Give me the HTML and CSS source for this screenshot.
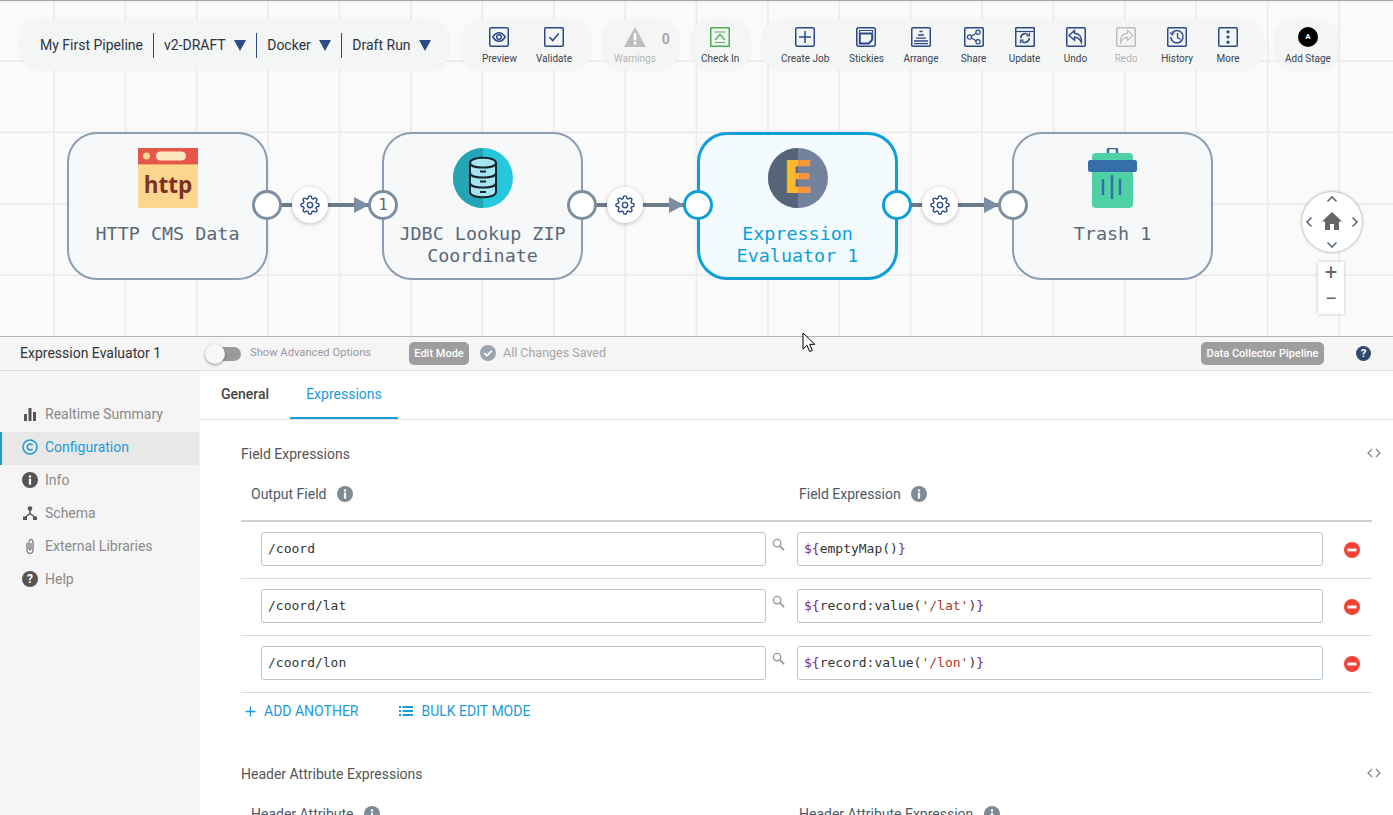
FILE: index.html
```html
<!DOCTYPE html>
<html lang="en">
<head>
    <meta charset="UTF-8">
    <meta name="viewport" content="width=device-width, initial-scale=1.0">
    <title>My First Pipeline</title>
    <link rel="stylesheet" href="styles.css">
</head>
<body>
    <svg class="sprite" aria-hidden="true">
        <symbol id="gear" viewBox="0 0 24 24">
            <circle cx="12" cy="12" r="3.2"/>
            <path d="M19.4 15a1.65 1.65 0 0 0 .33 1.82l.06.06a2 2 0 0 1 0 2.83 2 2 0 0 1-2.83 0l-.06-.06a1.65 1.65 0 0 0-1.82-.33 1.65 1.65 0 0 0-1 1.51V21a2 2 0 0 1-2 2 2 2 0 0 1-2-2v-.09A1.65 1.65 0 0 0 9 19.4a1.65 1.65 0 0 0-1.82.33l-.06.06a2 2 0 0 1-2.83 0 2 2 0 0 1 0-2.83l.06-.06a1.65 1.65 0 0 0 .33-1.82 1.65 1.65 0 0 0-1.51-1H3a2 2 0 0 1-2-2 2 2 0 0 1 2-2h.09A1.65 1.65 0 0 0 4.6 9a1.65 1.65 0 0 0-.33-1.82l-.06-.06a2 2 0 0 1 0-2.83 2 2 0 0 1 2.83 0l.06.06a1.65 1.65 0 0 0 1.82.33H9a1.65 1.65 0 0 0 1-1.51V3a2 2 0 0 1 2-2 2 2 0 0 1 2 2v.09a1.65 1.65 0 0 0 1 1.51 1.65 1.65 0 0 0 1.82-.33l.06-.06a2 2 0 0 1 2.83 0 2 2 0 0 1 0 2.83l-.06.06a1.65 1.65 0 0 0-.33 1.82V9a1.65 1.65 0 0 0 1.51 1H21a2 2 0 0 1 2 2 2 2 0 0 1-2 2h-.09a1.65 1.65 0 0 0-1.51 1z"/>
        </symbol>
        <symbol id="info" viewBox="0 0 16 16">
            <circle cx="8" cy="8" r="8" fill="currentColor"/>
            <circle cx="8" cy="4.4" r="1.2" fill="#fff"/>
            <rect x="6.9" y="6.6" width="2.2" height="6" fill="#fff"/>
        </symbol>
        <symbol id="search" viewBox="0 0 14 14">
            <circle cx="5.5" cy="5.5" r="4" fill="none" stroke="currentColor" stroke-width="1.5"/>
            <path d="M8.5 8.5l4.5 4.5" fill="none" stroke="currentColor" stroke-width="2"/>
        </symbol>
        <symbol id="remove" viewBox="0 0 16 16">
            <circle cx="8" cy="8" r="8" fill="#f44336"/>
            <rect x="3.5" y="6.6" width="9" height="2.8" fill="#fff"/>
        </symbol>
        <symbol id="collapse" viewBox="0 0 14 10">
            <path d="M5 1L1 5l4 4M9 1l4 4-4 4" fill="none" stroke="currentColor" stroke-width="1.3"/>
        </symbol>
    </svg>

    <div class="canvas">
        <div class="toolbar">
            <div class="tool-group pipeline-info">
                <span class="pipeline-name">My First Pipeline</span>
                <span class="divider"></span>
                <span class="selector">v2-DRAFT<i class="caret"></i></span>
                <span class="divider"></span>
                <span class="selector">Docker<i class="caret"></i></span>
                <span class="divider"></span>
                <span class="selector">Draft Run<i class="caret"></i></span>
            </div>

            <div class="tool-group group-preview">
                <div class="tool">
                    <svg class="tool-icon" viewBox="0 0 20 20"><rect x=".75" y=".75" width="18.5" height="18.5" rx="1.5"/><path d="M3.8 10c2-3.1 4-4.3 6.2-4.3s4.200 1.200 6.200 4.300c-2 3.100-4 4.300-6.200 4.300S5.800 13.100 3.800 10z"/><circle cx="10" cy="10" r="2.300"/></svg>
                    <span class="tool-label">Preview</span>
                </div>
                <div class="tool">
                    <svg class="tool-icon" viewBox="0 0 20 20"><rect x=".75" y=".75" width="18.5" height="18.5" rx="1"/><path d="M5.500 10l3.200 3.500 6-7"/></svg>
                    <span class="tool-label">Validate</span>
                </div>
            </div>

            <div class="tool-group group-warnings">
                <div class="tool">
                    <svg class="warning-icon" viewBox="0 0 22 20"><polygon points="11,0 22,20 0,20" fill="#bdbdbd"/><rect x="9.700" y="6" width="2.600" height="7.500" fill="#fff"/><rect x="9.700" y="15" width="2.600" height="2.600" fill="#fff"/></svg>
                    <span class="tool-label is-disabled">Warnings</span>
                </div>
                <span class="warning-count">0</span>
            </div>

            <div class="tool-group group-checkin">
                <div class="tool">
                    <svg class="tool-icon is-green" viewBox="0 0 20 20"><rect x=".75" y=".75" width="18.500" height="18.500" rx=".5"/><path d="M4.500 5h11M5 13l5-5.500 5 5.500M5 15.500h10" stroke-width="1.200"/></svg>
                    <span class="tool-label">Check In</span>
                </div>
            </div>

            <div class="tool-group group-actions">
                <div class="tool">
                    <svg class="tool-icon" viewBox="0 0 20 20"><rect x=".75" y=".75" width="18.500" height="18.500" rx="1.500"/><path d="M10 4v12M4 10h12"/></svg>
                    <span class="tool-label">Create Job</span>
                </div>
                <div class="tool">
                    <svg class="tool-icon" viewBox="0 0 20 20"><rect x=".75" y=".75" width="18.500" height="18.500" rx="2"/><path d="M3.500 5.500V3.500h13v2" stroke-width="1.200"/><path d="M3.800 6.500h12.400v6.300l-3.400 3.700h-9z" stroke-width="2"/></svg>
                    <span class="tool-label">Stickies</span>
                </div>
                <div class="tool">
                    <svg class="tool-icon" viewBox="0 0 20 20"><rect x=".75" y=".75" width="18.500" height="18.500" rx="1"/><path d="M8.500 4.500h3M7 8h6M5 11.200h10M3 14h14M3 16.700h14" stroke-width="1.300"/></svg>
                    <span class="tool-label">Arrange</span>
                </div>
                <div class="tool">
                    <svg class="tool-icon" viewBox="0 0 20 20"><rect x=".75" y=".75" width="18.500" height="18.500" rx="1"/><circle cx="14" cy="5.200" r="2.100" stroke-width="1.200"/><circle cx="14" cy="14.800" r="2.100" stroke-width="1.200"/><circle cx="5.500" cy="10" r="2.100" stroke-width="1.200"/><path d="M7.400 9l4.700-2.800M7.400 11l4.700 2.800" stroke-width="1.200"/></svg>
                    <span class="tool-label">Share</span>
                </div>
                <div class="tool">
                    <svg class="tool-icon" viewBox="0 0 20 20"><rect x=".75" y=".75" width="18.500" height="18.500" rx=".5"/><path d="M1 4.500h18" stroke-width="1.200"/><path d="M5.800 11a4.300 4.300 0 0 1 7.300-3.200M14.200 11a4.300 4.300 0 0 1-7.300 3.200" stroke-width="1.600"/><path d="M14.500 5.800v3h-3M5.500 16.200v-3h3" stroke-width="1.300"/></svg>
                    <span class="tool-label">Update</span>
                </div>
                <div class="tool">
                    <svg class="tool-icon" viewBox="0 0 20 20"><rect x=".75" y=".75" width="18.500" height="18.500" rx="1"/><path d="M8.500 3.500L3 8.500l5.500 4.800v-3c3 0 5.300 1 6.900 5.200.8-5.500-2.100-9-6.900-9.300z" stroke-width="1.400"/></svg>
                    <span class="tool-label">Undo</span>
                </div>
                <div class="tool">
                    <svg class="tool-icon is-disabled" viewBox="0 0 20 20"><rect x=".75" y=".75" width="18.500" height="18.500" rx="1"/><path d="M11.500 3.500L17 8.500l-5.500 4.800v-3c-3 0-5.300 1-6.900 5.200-.8-5.500 2.100-9 6.900-9.300z" stroke-width="1.200"/></svg>
                    <span class="tool-label is-disabled">Redo</span>
                </div>
                <div class="tool">
                    <svg class="tool-icon" viewBox="0 0 20 20"><rect x=".75" y=".75" width="18.500" height="18.500" rx="1"/><path d="M5 5.800a6.200 6.200 0 1 1-1.300 4.200" stroke-width="1.500"/><path d="M3 5.500l2.300 2.300 1.900-2.500" stroke-width="1.200"/><path d="M10.500 6v4.500l3 1.700" stroke-width="1.300"/></svg>
                    <span class="tool-label">History</span>
                </div>
                <div class="tool">
                    <svg class="tool-icon" viewBox="0 0 20 20"><rect x=".75" y=".75" width="18.500" height="18.500" rx="1"/><circle class="dot" cx="10" cy="4.800" r="1.600"/><circle class="dot" cx="10" cy="10" r="1.600"/><circle class="dot" cx="10" cy="15.200" r="1.600"/></svg>
                    <span class="tool-label">More</span>
                </div>
            </div>

            <div class="tool-group group-stage">
                <div class="tool">
                    <span class="stage-badge">A</span>
                    <span class="tool-label">Add Stage</span>
                </div>
            </div>
        </div>

        <div class="pipeline">
            <div class="stage">
                <svg class="stage-icon" viewBox="0 0 60 60">
                    <rect width="60" height="60" fill="#fbd68f"/>
                    <rect width="60" height="16" fill="#e5574a"/>
                    <rect y="16" width="60" height="1" fill="#f0a46a"/>
                    <circle cx="8.500" cy="8" r="3.500" fill="#fbd68f"/>
                    <rect x="18" y="3.500" width="30" height="9" rx="4.500" fill="#fde9c0"/>
                    <text x="30" y="45" class="http-text">http</text>
                </svg>
                <div class="stage-name">HTTP CMS Data</div>
                <span class="port port-out"></span>
            </div>
            <div class="edge">
                <span class="edge-line"></span>
                <span class="edge-arrow"></span>
                <span class="edge-gear"><svg class="gear-icon"><use href="#gear"/></svg></span>
            </div>

            <div class="stage">
                <svg class="stage-icon" viewBox="0 0 60 60">
                    <circle cx="30" cy="30" r="30" fill="#27c8de"/>
                    <path d="M30 0a30 30 0 0 0 0 60z" fill="#25a4b5"/>
                    <path d="M17 15c0-7 26-7 26 0v29c0 7-26 7-26 0z" fill="#a5e4f0" stroke="#17252c" stroke-width="2"/>
                    <path d="M17 15c0 6 26 6 26 0M17 25c0 6 26 6 26 0M17 35c0 6 26 6 26 0" fill="none" stroke="#17252c" stroke-width="2"/>
                    <path d="M27 23.500h6M27 33.500h6M27 44h6" stroke="#17252c" stroke-width="2"/>
                </svg>
                <div class="stage-name">JDBC Lookup ZIP Coordinate</div>
                <span class="port port-in">1</span>
                <span class="port port-out"></span>
            </div>
            <div class="edge">
                <span class="edge-line"></span>
                <span class="edge-arrow"></span>
                <span class="edge-gear"><svg class="gear-icon"><use href="#gear"/></svg></span>
            </div>

            <div class="stage is-selected">
                <svg class="stage-icon" viewBox="0 0 60 60">
                    <defs>
                        <linearGradient id="e-fill" x1="0" x2="1" y1="0" y2="0">
                            <stop offset=".5" stop-color="#fdb832"/>
                            <stop offset=".5" stop-color="#f7953a"/>
                        </linearGradient>
                    </defs>
                    <circle cx="30" cy="30" r="30" fill="#73839b"/>
                    <path d="M30 0a30 30 0 0 0 0 60z" fill="#56647a"/>
                    <text x="30" y="45" class="e-text" fill="url(#e-fill)">E</text>
                </svg>
                <div class="stage-name">Expression Evaluator 1</div>
                <span class="port port-in"></span>
                <span class="port port-out"></span>
            </div>
            <div class="edge">
                <span class="edge-line"></span>
                <span class="edge-arrow"></span>
                <span class="edge-gear"><svg class="gear-icon"><use href="#gear"/></svg></span>
            </div>

            <div class="stage">
                <svg class="stage-icon" viewBox="0 0 60 60">
                    <rect x="25" y="0" width="9" height="8" rx="2" fill="none" stroke="#356ea8" stroke-width="2.500"/>
                    <path d="M9 9a4 4 0 0 1 4-4h33a4 4 0 0 1 4 4v47a4 4 0 0 1-4 4H13a4 4 0 0 1-4-4z" fill="#4fd0a5"/>
                    <rect x="5" y="12" width="49" height="12" rx="2.500" fill="#356ea8"/>
                    <path d="M20 31v16M29 27v24M37 31v16" stroke="#356ea8" stroke-width="2.500"/>
                </svg>
                <div class="stage-name">Trash 1</div>
                <span class="port port-in"></span>
            </div>
        </div>

        <div class="nav-pad">
            <svg viewBox="0 0 60 60">
                <path class="nav-arrow" d="M25.500 9.500L30 5l4.500 4.500M25.500 50.500L30 55l4.500-4.500M9.500 25.500L5 30l4.500 4.500M50.500 25.500L55 30l-4.500 4.500"/>
                <path d="M30 20L20 29.500h3V38h5v-6h4v6h5v-8.500h3z" fill="#666"/>
            </svg>
        </div>
        <div class="zoom-box">
            <span class="zoom-btn">+</span>
            <span class="zoom-btn">&minus;</span>
        </div>
    </div>

    <div class="panel">
        <div class="panel-head">
            <span class="panel-title">Expression Evaluator 1</span>
            <span class="toggle"><span class="toggle-knob"></span></span>
            <span class="toggle-label">Show Advanced Options</span>
            <span class="badge edit-badge">Edit Mode</span>
            <svg class="saved-icon" viewBox="0 0 16 16"><circle cx="8" cy="8" r="8" fill="#9aa5b1"/><path d="M4.300 8.200l2.600 2.600 4.800-5" fill="none" stroke="#fff" stroke-width="1.800"/></svg>
            <span class="saved-label">All Changes Saved</span>
            <span class="badge collector-badge">Data Collector Pipeline</span>
            <svg class="help-icon" viewBox="0 0 16 16"><circle cx="8" cy="8" r="8" fill="#2f4a6d"/><text x="8" y="12" class="help-text">?</text></svg>
        </div>

        <div class="panel-body">
            <nav class="sidebar">
                <a class="side-item">
                    <svg class="side-icon" viewBox="0 0 16 16"><path d="M2 8h3v7H2zM6.500 2h3v13h-3zM11 6h3v9h-3z" fill="currentColor"/></svg>
                    Realtime Summary
                </a>
                <a class="side-item is-active">
                    <svg class="side-icon" viewBox="0 0 16 16"><circle cx="8" cy="8" r="7" fill="none" stroke="currentColor" stroke-width="1.500"/><path d="M10.500 6a3 3 0 1 0 0 4" fill="none" stroke="currentColor" stroke-width="1.500"/></svg>
                    Configuration
                </a>
                <a class="side-item">
                    <svg class="side-icon"><use href="#info"/></svg>
                    Info
                </a>
                <a class="side-item">
                    <svg class="side-icon" viewBox="0 0 16 16"><circle cx="8" cy="3.500" r="2.300" fill="currentColor"/><rect x="1" y="11.500" width="4" height="3.500" fill="currentColor"/><rect x="11" y="11.500" width="4" height="3.500" fill="currentColor"/><path d="M8 5v4M8 8.500l-5 4M8 8.500l5 4" fill="none" stroke="currentColor" stroke-width="1.500"/></svg>
                    Schema
                </a>
                <a class="side-item">
                    <svg class="side-icon" viewBox="0 0 16 16"><path d="M5 5v7.500a3 3 0 0 0 6 0V3.500a2 2 0 0 0-4 0V11a1 1 0 0 0 2 0V5" fill="none" stroke="currentColor" stroke-width="1"/></svg>
                    External Libraries
                </a>
                <a class="side-item">
                    <svg class="side-icon" viewBox="0 0 16 16"><circle cx="8" cy="8" r="8" fill="currentColor"/><text x="8" y="12.200" class="help-text">?</text></svg>
                    Help
                </a>
            </nav>

            <main class="content">
                <div class="tabs">
                    <span class="tab">General</span>
                    <span class="tab is-active">Expressions</span>
                </div>

                <section class="config-section">
                    <div class="section-title">
                        <span>Field Expressions</span>
                        <svg class="collapse-icon"><use href="#collapse"/></svg>
                    </div>
                    <div class="col-head">
                        <span class="col-first">Output Field <svg class="info-icon"><use href="#info"/></svg></span>
                        <span>Field Expression <svg class="info-icon"><use href="#info"/></svg></span>
                    </div>
                    <div class="expr-row">
                        <div class="code-input">/coord</div>
                        <span class="search-cell"><svg class="search-icon"><use href="#search"/></svg></span>
                        <div class="code-input code-wide"><span class="tk-el">$</span><span class="tk-br">{</span>emptyMap()<span class="tk-br">}</span></div>
                        <svg class="remove-icon"><use href="#remove"/></svg>
                    </div>
                    <div class="expr-row">
                        <div class="code-input">/coord/lat</div>
                        <span class="search-cell"><svg class="search-icon"><use href="#search"/></svg></span>
                        <div class="code-input code-wide"><span class="tk-el">$</span><span class="tk-br">{</span>record:value(<span class="tk-str">'/lat'</span>)<span class="tk-br">}</span></div>
                        <svg class="remove-icon"><use href="#remove"/></svg>
                    </div>
                    <div class="expr-row">
                        <div class="code-input">/coord/lon</div>
                        <span class="search-cell"><svg class="search-icon"><use href="#search"/></svg></span>
                        <div class="code-input code-wide"><span class="tk-el">$</span><span class="tk-br">{</span>record:value(<span class="tk-str">'/lon'</span>)<span class="tk-br">}</span></div>
                        <svg class="remove-icon"><use href="#remove"/></svg>
                    </div>
                    <div class="row-actions">
                        <a class="action">
                            <svg class="action-icon" viewBox="0 0 12 12"><path d="M6 .500v11M.500 6h11" fill="none" stroke="currentColor" stroke-width="1.500"/></svg>
                            ADD ANOTHER
                        </a>
                        <a class="action">
                            <svg class="action-icon bulk-icon" viewBox="0 0 14 10"><path d="M0 0h2v2H0zM3.500 0H14v2H3.500zM0 4h2v2H0zM3.500 4H14v2H3.500zM0 8h2v2H0zM3.500 8H14v2H3.500z" fill="currentColor"/></svg>
                            BULK EDIT MODE
                        </a>
                    </div>
                </section>

                <section class="config-section next-section">
                    <div class="section-title">
                        <span>Header Attribute Expressions</span>
                        <svg class="collapse-icon"><use href="#collapse"/></svg>
                    </div>
                    <div class="col-head">
                        <span class="col-first">Header Attribute <svg class="info-icon"><use href="#info"/></svg></span>
                        <span>Header Attribute Expression <svg class="info-icon"><use href="#info"/></svg></span>
                    </div>
                </section>
            </main>
        </div>
    </div>

    <svg class="mouse-cursor" viewBox="0 0 13 21"><path d="M1 1v16l4-3.700 2.600 6.200 2.700-1.100L7.700 12.300h5.100z" fill="#fff" stroke="#000" stroke-width="1"/></svg>
</body>
</html>
```

FILE: styles.css
```css
* {
    box-sizing: border-box;
}

html, body {
    height: 100%;
    overflow: hidden;
}

body {
    margin: 0;
    display: flex;
    flex-direction: column;
    position: relative;
    font-family: Roboto, "Liberation Sans", sans-serif;
    font-size: 14px;
    color: #444;
    background: #fff;
}

.sprite {
    display: none;
}

/* canvas */

.canvas {
    position: relative;
    flex: none;
    height: 336px;
    background-color: #fafafa;
    background-image:
        linear-gradient(to right, #ededed 2px, transparent 2px),
        linear-gradient(to bottom, #ededed 2px, transparent 2px);
    background-size: 71.4px 71.4px;
    background-position: 53px 60px;
    box-shadow: inset 0 2px 1px -1px #9c9c9c;
}

.toolbar {
    position: absolute;
    top: 20px;
    left: 20px;
    display: flex;
    gap: 12px;
}

.tool-group {
    display: flex;
    flex: none;
    height: 50px;
    background: #f4f6f6;
    border-radius: 20px;
    box-shadow: 0 0 3px rgba(0, 0, 0, 0.06);
}

.pipeline-info {
    width: 429px;
    align-items: center;
    padding-left: 20px;
    font-size: 14px;
    color: #2c3440;
}

.pipeline-name {
    margin-right: 10px;
}

.divider {
    width: 1px;
    height: 25px;
    background: #2b4a86;
}

.selector {
    display: flex;
    align-items: center;
    padding: 0 10px;
}

.caret {
    width: 0;
    height: 0;
    margin-left: 8.5px;
    border-left: 6px solid transparent;
    border-right: 6px solid transparent;
    border-top: 11px solid #2b4a86;
}

.group-preview {
    width: 130px;
    gap: 19px;
    padding-left: 21px;
}

.group-warnings {
    width: 76px;
    padding-left: 11px;
}

.group-checkin {
    width: 59px;
    padding-left: 10px;
}

.group-actions {
    width: 501px;
    gap: 19.6px;
    padding-left: 19px;
}

.group-stage {
    width: 64px;
    padding-left: 10px;
}

.warning-count {
    margin: 11px 0 0 6px;
    font-size: 14px;
    font-weight: 700;
    color: #a3a9ae;
}

.tool {
    display: flex;
    flex-direction: column;
    align-items: center;
    min-width: 31px;
    padding-top: 7px;
}

.tool-icon {
    width: 20px;
    height: 20px;
    fill: none;
    stroke: #2b4a86;
    stroke-width: 1.5;
}

.tool-icon.is-green {
    stroke: #4caf50;
}

.tool-icon.is-disabled {
    stroke: #bdbdbd;
}

.tool-icon .dot {
    fill: #2b4a86;
    stroke: none;
}

.warning-icon {
    width: 22px;
    height: 20px;
}

.stage-badge {
    width: 20px;
    height: 20px;
    border-radius: 50%;
    background: #000;
    color: #fff;
    font-size: 8px;
    font-weight: 700;
    line-height: 20px;
    text-align: center;
}

.tool-label {
    margin-top: 5px;
    font-size: 10px;
    line-height: 13px;
    color: #3a4452;
    white-space: nowrap;
}

.tool-label.is-disabled {
    color: #b5b5b5;
}

/* pipeline stages */

.pipeline {
    position: absolute;
    top: 132px;
    left: 67px;
    display: flex;
}

.stage {
    position: relative;
    width: 201px;
    height: 148px;
    padding: 14px 8px 0;
    border: 2px solid #8c9db1;
    border-radius: 30px;
    background: #f7f8fa;
    text-align: center;
}

.stage-icon {
    display: block;
    width: 60px;
    height: 60px;
    margin: 0 auto;
}

.http-text {
    font-family: "Open Sans", sans-serif;
    font-size: 22.5px;
    font-weight: 700;
    text-anchor: middle;
    fill: #7d3025;
}

.e-text {
    font-family: "DejaVu Sans", sans-serif;
    font-size: 45px;
    font-weight: 700;
    text-anchor: middle;
}

.stage-name {
    margin-top: 15px;
    font-family: "DejaVu Sans Mono", monospace;
    font-size: 18.4px;
    line-height: 22px;
    color: #5c6875;
}

.stage.is-selected {
    border: 3px solid #0f9fd8;
    background: #f3fbff;
    padding-top: 13px;
}

.stage.is-selected .stage-name {
    color: #0f9fd8;
}

.port {
    position: absolute;
    top: 56px;
    width: 30px;
    height: 30px;
    border: 3px solid #7d8ea3;
    border-radius: 50%;
    background: #fff;
    font-family: "DejaVu Sans Mono", monospace;
    font-size: 16px;
    line-height: 24px;
    color: #5c6875;
    z-index: 2;
}

.port-in {
    left: -16px;
}

.port-out {
    right: -16px;
}

.is-selected .port {
    top: 55px;
    border-color: #0f9fd8;
}

.is-selected .port-in {
    left: -17px;
}

.is-selected .port-out {
    right: -17px;
}

.edge {
    position: relative;
    flex: none;
    width: 114px;
}

.edge-line {
    position: absolute;
    top: 71px;
    left: 0;
    right: 9px;
    height: 4px;
    background: #6d7a88;
}

.edge-arrow {
    position: absolute;
    top: 65px;
    right: 13px;
    width: 0;
    height: 0;
    border-top: 8px solid transparent;
    border-bottom: 8px solid transparent;
    border-left: 15px solid #7a8ea6;
}

.edge-gear {
    position: absolute;
    top: 55px;
    left: 24px;
    display: flex;
    align-items: center;
    justify-content: center;
    width: 36px;
    height: 36px;
    border-radius: 50%;
    background: #fff;
    box-shadow: 0 1px 4px rgba(0, 0, 0, 0.25);
}

.gear-icon {
    width: 20px;
    height: 20px;
    fill: none;
    stroke: #2b4a86;
    stroke-width: 1.7;
}

.nav-pad {
    position: absolute;
    top: 192px;
    left: 1302px;
    width: 60px;
    height: 60px;
    border-radius: 50%;
    background: #fff;
    box-shadow: 0 0 3px rgba(0, 0, 0, 0.45);
}

.nav-pad svg {
    display: block;
}

.nav-arrow {
    fill: none;
    stroke: #5b6c7d;
    stroke-width: 1.6;
}

.zoom-box {
    position: absolute;
    top: 262px;
    left: 1318px;
    display: flex;
    flex-direction: column;
    width: 26px;
    height: 52px;
    background: #fff;
    box-shadow: 0 0 3px rgba(0, 0, 0, 0.25);
}

.zoom-btn {
    height: 26px;
    font-size: 22px;
    line-height: 22px;
    text-align: center;
    color: #666;
}

/* bottom panel */

.panel {
    flex: 1;
    display: flex;
    flex-direction: column;
    min-height: 0;
    border-top: 1px solid #b4b4b4;
}

.panel-head {
    flex: none;
    display: flex;
    align-items: center;
    height: 34px;
    padding-left: 20px;
    background: #f5f5f5;
    border-bottom: 1px solid #e0e0e0;
}

.panel-title {
    width: 190px;
    margin-top: -2px;
    font-size: 14px;
    color: #333;
}

.toggle {
    position: relative;
    width: 31px;
    height: 14px;
    border-radius: 7px;
    background: #9a9a9a;
}

.toggle-knob {
    position: absolute;
    top: -3px;
    left: -5px;
    width: 20px;
    height: 20px;
    border-radius: 50%;
    background: #f7f7f7;
    box-shadow: 0 1px 3px rgba(0, 0, 0, 0.4);
}

.toggle-label {
    width: 159px;
    margin-left: 9px;
    margin-top: -2px;
    font-size: 11.2px;
    color: #9a9a9a;
}

.badge {
    display: flex;
    align-items: center;
    justify-content: center;
    height: 23px;
    border-radius: 5px;
    background: #9e9e9e;
    color: #fff;
    font-size: 11px;
    font-weight: 500;
}

.edit-badge {
    width: 60px;
}

.saved-icon {
    width: 16px;
    height: 16px;
    margin-left: 11px;
    margin-top: -2px;
}

.saved-label {
    width: 698px;
    margin-left: 7px;
    margin-top: -2px;
    font-size: 12.5px;
    color: #a5a5a5;
}

.collector-badge {
    width: 123px;
}

.help-icon {
    width: 15px;
    height: 15px;
    margin-left: 32px;
}

.help-text {
    font-family: Roboto, sans-serif;
    font-size: 12px;
    font-weight: 700;
    fill: #fff;
    text-anchor: middle;
}

.panel-body {
    flex: 1;
    display: flex;
    min-height: 0;
}

.sidebar {
    flex: none;
    width: 199px;
    margin-right: 1px;
    padding-top: 28px;
    background: #f5f5f5;
    box-shadow: 1px 0 2px rgba(0, 0, 0, 0.06);
}

.side-item {
    display: flex;
    align-items: center;
    gap: 7px;
    height: 33px;
    padding: 0 0 4px 22px;
    font-size: 14px;
    color: #8a8a8a;
}

.side-item.is-active {
    padding-left: 20px;
    border-left: 2px solid #1b9bd7;
    background: #e8e8e8;
    color: #1b9bd7;
}

.side-icon {
    width: 16px;
    height: 16px;
    color: #555;
}

.is-active .side-icon {
    color: #1b9bd7;
}

.content {
    flex: 1;
    min-width: 0;
}

.tabs {
    display: flex;
    gap: 5px;
    height: 49px;
    padding-left: 5px;
    border-bottom: 1px solid #dde1e4;
}

.tab {
    height: 48px;
    padding: 0 16px;
    line-height: 46px;
    font-size: 14px;
    font-weight: 500;
    color: #444;
}

.tab.is-active {
    border-bottom: 2px solid #1b9bd7;
    color: #1b9bd7;
    font-weight: 400;
}

.config-section {
    padding: 24px 21px 0 41px;
}

.next-section {
    padding-top: 35px;
}

.section-title {
    display: flex;
    align-items: center;
    justify-content: space-between;
    height: 20px;
    font-size: 14px;
    color: #555;
}

.collapse-icon {
    width: 14px;
    height: 10px;
    margin-right: -9px;
    margin-top: -2px;
    color: #888;
}

.col-head {
    display: flex;
    height: 38px;
    margin-top: 20px;
    padding-top: 2px;
    border-bottom: 2px solid #cfcfcf;
    font-size: 14px;
    color: #4d5966;
}

.col-first {
    width: 558px;
    padding-left: 10px;
}

.info-icon {
    width: 16px;
    height: 16px;
    margin-left: 7px;
    vertical-align: -3px;
    color: #7e8a96;
}

.expr-row {
    display: flex;
    align-items: flex-start;
    height: 57px;
    padding: 10px 0 0 20px;
    border-bottom: 1px solid #d5dbe0;
}

.code-input {
    width: 505px;
    height: 34px;
    padding: 0 6px;
    border: 1px solid #b9c7d3;
    border-radius: 3px;
    font-family: "DejaVu Sans Mono", monospace;
    font-size: 13px;
    line-height: 32px;
    color: #333;
}

.code-wide {
    width: 526px;
}

.tk-el {
    color: #8a1f6e;
}

.tk-br {
    color: #6f2a9a;
}

.tk-str {
    color: #a33a2a;
}

.search-cell {
    flex: none;
    width: 31px;
    padding: 6px 0 0 6px;
}

.search-icon {
    display: block;
    width: 13px;
    height: 13px;
    color: #9a9a9a;
}

.remove-icon {
    flex: none;
    width: 16px;
    height: 16px;
    margin: 10px 0 0 21px;
}

.row-actions {
    display: flex;
    align-items: center;
    gap: 41px;
    height: 36px;
    padding-left: 4px;
}

.action {
    display: flex;
    align-items: center;
    gap: 8px;
    font-size: 14px;
    color: #1b9bd7;
}

.action-icon {
    width: 11px;
    height: 11px;
}

.bulk-icon {
    width: 14px;
    height: 10px;
}

.mouse-cursor {
    position: absolute;
    top: 332px;
    left: 802px;
    width: 13px;
    height: 21px;
}
```
